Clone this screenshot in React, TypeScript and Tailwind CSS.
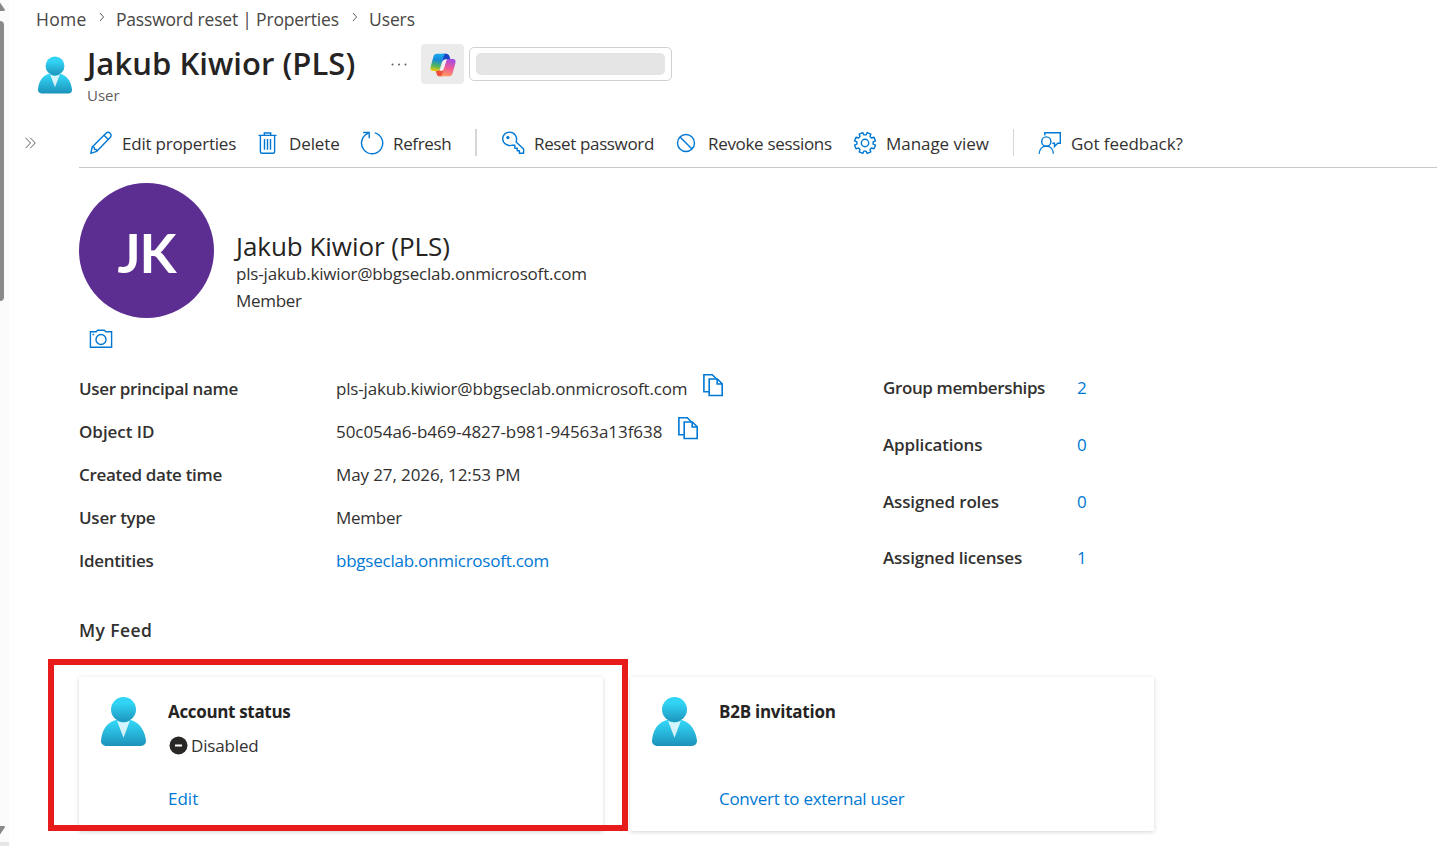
import React from "react";

const stroke = {
  fill: "none",
  stroke: "#0078d4",
  strokeWidth: 1.4,
};

const EditIcon = () => (
  <svg width="24" height="24" viewBox="0 0 24 24" {...stroke}>
    <path d="M1.8 22.3 3.2 16 17 2.2a2.9 2.9 0 0 1 4.2 0 2.9 2.9 0 0 1 0 4.2L7.8 20.3z" strokeLinejoin="round" />
    <path d="M3.4 15.9c1.3-.1 2.1.5 2.1 2.3 1.8 0 2.4.8 2.3 2.1M15 4.3l4.3 4.3" />
  </svg>
);

const DeleteIcon = () => (
  <svg width="24" height="24" viewBox="0 0 24 24" {...stroke}>
    <path d="M2.5 4.4h18M8.3 4.2V2h6.4v2.2M4.400 4.5v16.200c0 .9.6 1.5 1.5 1.5h11.200c.9 0 1.5-.6 1.5-1.5V4.5" />
    <path d="M8.5 8v10.8M11.5 8v10.8M14.5 8v10.8" />
  </svg>
);

const RefreshIcon = () => (
  <svg width="24" height="24" viewBox="0 0 24 24" {...stroke}>
    <path d="M14.8 1.9A10.6 10.6 0 1 1 8.2 2.3M3.2 1.5h6v5.8" />
  </svg>
);

const KeyIcon = () => (
  <svg width="24" height="24" viewBox="0 0 24 24" {...stroke}>
    <path
      d="M15.1 10.9 22.6 18v4.3h-4.2v-2.5h-2.2v-2.5h-2.4v-3l-2.2-.1c-4.2 1.4-9.9-1.3-9.9-6.400 0-3.8 3-6.700 6.800-6.700 4.900 0 8.300 4.800 6.600 9.800z"
      strokeLinejoin="round"
    />
    <circle cx="6.9" cy="6.6" r="1" fill="#0078d4" />
  </svg>
);

const BlockIcon = () => (
  <svg width="24" height="24" viewBox="0 0 24 24" {...stroke}>
    <circle cx="12" cy="12" r="8.5" />
    <path d="m6 6 12 12" />
  </svg>
);

const SettingsIcon = () => {
  const teeth = [
    [-15, 8.2],
    [-10.5, 10.7],
    [10.5, 10.7],
    [15, 8.2],
  ];
  let points = "";
  for (let i = 0; i < 8; i++) {
    teeth.forEach(([deg, r]) => {
      const a = ((i * 45 + 22.5 + deg) * Math.PI) / 180;
      points += `${(12 + r * Math.cos(a)).toFixed(2)},${(12 + r * Math.sin(a)).toFixed(2)} `;
    });
  }
  return (
    <svg width="24" height="24" viewBox="0 0 24 24" {...stroke}>
      <polygon points={points} strokeLinejoin="round" />
      <circle cx="12" cy="12" r="3.7" />
    </svg>
  );
};

const FeedbackIcon = () => (
  <svg width="24" height="24" viewBox="0 0 24 24" {...stroke}>
    <circle cx="8.3" cy="10.5" r="4.6" />
    <path d="M1.2 22.8c.2-4.700 3-7.700 7.100-7.700s6.900 3 7.100 7.700M6.800 4.500V1.700h15.500v10.600h-2.600l-3.200 3.300v-3.300h-2.200" />
  </svg>
);

const CameraIcon = () => (
  <svg width="24" height="20" viewBox="0 0 24 20" {...stroke}>
    <path d="M1.4 2.8h5.800l1.500-1.500h6.600l1.500 1.500h5.800v15.500H1.400z" />
    <circle cx="12" cy="10.5" r="5" />
    <path d="M3.5 5.5H5" />
  </svg>
);

const CopyIcon = () => (
  <svg width="22" height="24" viewBox="0 0 22 24" {...stroke} strokeWidth="1.6">
    <path d="M7 18.700H1.900V1.800h8.400l4.200 4.200" />
    <path d="M7.200 6h8.200l4.800 4.800v11.700h-13zM15.200 6v5h5" />
  </svg>
);

const PersonIcon = ({ className, id }: { className: string; id: string }) => (
  <svg className={className} viewBox="0 0 45 49">
    <defs>
      <linearGradient id={`${id}-body`} x1="0" y1="22" x2="0" y2="52" gradientUnits="userSpaceOnUse">
        <stop offset="0.1" stopColor="#32d4f5" />
        <stop offset="1" stopColor="#198ab3" />
      </linearGradient>
      <linearGradient id={`${id}-head`} x1="0" y1="0" x2="0" y2="28" gradientUnits="userSpaceOnUse">
        <stop offset="0.22" stopColor="#32d4f5" />
        <stop offset="1" stopColor="#198ab3" />
      </linearGradient>
    </defs>
    <path d="M40 49a5 5 0 0 0 5-5v-.6C43.500 31.500 36.500 22 22.500 22S1.300 30.200 0 43.400A5 5 0 0 0 4.400 49z" fill={`url(#${id}-body)`} />
    <path d="M22.5 25.500c-2.400 0-4.700-.8-6.600-2l6.600 17.200L29 23.600a12 12 0 0 1-6.500 1.900z" fill="#fff" opacity=".8" />
    <circle cx="22.5" cy="12.5" r="12.5" fill={`url(#${id}-head)`} />
  </svg>
);

const CopilotIcon = () => (
  <svg width="26" height="24" viewBox="0 0 26 24">
    <defs>
      <linearGradient id="cp-left" x1="8" y1="1" x2="5" y2="18" gradientUnits="userSpaceOnUse">
        <stop offset="0" stopColor="#17a9ee" />
        <stop offset=".35" stopColor="#1689d8" />
        <stop offset=".7" stopColor="#53b55f" />
        <stop offset="1" stopColor="#f2cb0a" />
      </linearGradient>
      <linearGradient id="cp-right" x1="21" y1="6" x2="17" y2="24" gradientUnits="userSpaceOnUse">
        <stop offset="0" stopColor="#a04be8" />
        <stop offset=".5" stopColor="#ee5a96" />
        <stop offset="1" stopColor="#ff9d5c" />
      </linearGradient>
    </defs>
    <path d="M13 .7h3.400c1.600 0 2.500.9 3 2.400l1.100 3.700h-5.200c-2 0-2.800 1-3.300 2.700z" fill="#1b45c4" />
    <path d="M13 23.300H9.600c-1.600 0-2.500-.9-3-2.400l-1.100-3.700h5.200c2 0 2.800-1 3.300-2.700z" fill="#f0503a" />
    <path d="M7.200.7h9c-1.600.2-2.200 1.400-2.700 3l-3.300 11.200c-.6 2-1.500 3.100-3.500 3.100H3.200C1 18 0 16.400.6 14L3.300 3.900C3.900 1.800 5.100.7 7.200.7z" fill="url(#cp-left)" />
    <path d="M18.800 23.300h-9c1.600-.2 2.200-1.400 2.700-3l3.300-11.200c.6-2 1.500-3.100 3.500-3.100h3.500c2.200 0 3.200 1.600 2.600 4l-2.700 10.100c-.6 2.100-1.800 3.200-3.900 3.200z" fill="url(#cp-right)" />
    {/* light fold between the two ribbons */}
    <path d="M17.600 6.300h-1.800c-1.400 0-2 .8-2.400 2.100l-2.300 7.600c-.3 1-.7 1.600-1.500 2h1.400c1.400 0 2.100-.8 2.500-2.100l2.300-7.500c.3-1 .8-1.700 1.800-2.100z" fill="#f4f1f3" />
  </svg>
);

const Chevron = () => (
  <svg width="6" height="10" viewBox="0 0 6 10" fill="none" stroke="#605e5c">
    <path d="m1 1 3.600 4L1 9" />
  </svg>
);

const details = [
  { label: "User principal name", labelClass: "tracking-[-0.34px]", value: "pls-jakub.kiwior@bbgseclab.onmicrosoft.com", valueClass: "tracking-[-0.17px]", copy: true },
  { label: "Object ID", labelClass: "tracking-[-0.04px]", value: "50c054a6-b469-4827-b981-94563a13f638", valueClass: "tracking-[-0.05px]", copy: true },
  { label: "Created date time", labelClass: "tracking-[-0.31px]", value: "May 27, 2026, 12:53 PM", valueClass: "tracking-[-0.11px]" },
  { label: "User type", labelClass: "tracking-[-0.26px]", value: "Member", valueClass: "tracking-[-0.25px]" },
  { label: "Identities", labelClass: "tracking-[-0.3px]", value: "bbgseclab.onmicrosoft.com", valueClass: "tracking-[-0.24px] text-[#0078d4]" },
];

const counts = [
  { label: "Group memberships", labelClass: "tracking-[-0.38px]", value: 2 },
  { label: "Applications", labelClass: "tracking-[-0.15px]", value: 0 },
  { label: "Assigned roles", labelClass: "tracking-[-0.15px]", value: 0 },
  { label: "Assigned licenses", labelClass: "tracking-[-0.2px]", value: 1 },
];

type CommandProps = {
  icon: React.ReactNode;
  text: string;
  className: string;
  textClass: string;
};

const Command = ({ icon, text, className, textClass }: CommandProps) => (
  <button className={`flex shrink-0 items-center ${className}`}>
    <span className="-mt-0.5 shrink-0">{icon}</span>
    <span className={textClass}>{text}</span>
  </button>
);

const App = () => {
  return (
    <div className="relative flex h-[846px] w-full overflow-hidden whitespace-nowrap bg-white font-['Open_Sans','Noto_Sans',sans-serif] text-[17px] leading-6 text-[#323130]">
      {/* scrollbar */}
      <div className="flex w-[9px] shrink-0 flex-col bg-[#fbfbfb]">
        <svg width="9" height="21" viewBox="0 0 9 21" fill="#8a8886">
          <path d="M-5 11 0 2.500 4.800 9.500c.3.800 0 1.500-1 1.500z" />
        </svg>
        <div className="h-[280px] w-1 rounded-r bg-[#8b8987]" />
        <svg className="mt-auto" width="9" height="20" viewBox="0 0 9 20" fill="#8a8886">
          <path d="M-5 4h8.800c1 0 1.300.7 1 1.400L0 12.500z" />
        </svg>
        <div className="h-1 bg-[#e6e6e6]" />
      </div>
      {/* collapsed menu */}
      <div className="w-[70px] shrink-0 pl-4 pt-[137px]">
        <svg width="12" height="12" viewBox="0 0 12 12" fill="none" stroke="#605e5c">
          <path d="m.5.8 5 5.200-5 5.200M5.300.8l5 5.200-5 5.200" />
        </svg>
      </div>
      <main className="min-w-0 flex-1">
        {/* breadcrumb */}
        <nav className="-ml-[43px] flex h-[38px] items-center text-[17.5px] text-[#484644]">
          <span className="w-[63px] tracking-[0.3px]">Home</span>
          <span className="-mt-[5px] w-[17px]"><Chevron /></span>
          <span className="w-[236px] tracking-[-0.2px]">Password reset | Properties</span>
          <span className="-mt-[5px] w-[17px]"><Chevron /></span>
          <span className="tracking-[-0.1px]">Users</span>
        </nav>
        {/* title */}
        <header className="-ml-[41px] flex h-[82px] pt-px">
          <PersonIcon className="mt-[17px] h-[38px] w-[34px]" id="user" />
          <div className="ml-[15px] w-[304px]">
            <h1 className="mt-1 h-10 text-[31px] font-semibold leading-10 tracking-[0.05px] text-[#252423]">
              Jakub Kiwior (PLS)
            </h1>
            <p className="h-6 text-[15px] text-[#605e5c]">User</p>
          </div>
          <svg className="mt-6 mr-[14px] shrink-0" width="16" height="3" viewBox="0 0 16 3" fill="#605e5c">
            <circle cx="1.5" cy="1.5" r="1" />
            <circle cx="8" cy="1.5" r="1" />
            <circle cx="14.5" cy="1.5" r="1" />
          </svg>
          <div className="mt-[5px] flex h-10 w-[43px] items-center justify-center rounded bg-[#ebebeb] pt-0.5">
            <CopilotIcon />
          </div>
          <div className="mt-2 ml-[5px] h-[34px] w-[203px] rounded-[5px] border border-[#d1d1d1] px-1.5 py-[5px]">
            <div className="h-[22px] rounded-[5px] bg-[#e5e5e5]" />
          </div>
        </header>
        {/* commands */}
        <div className="flex h-12 items-center border-b border-[#c8c8c8] pl-[10px]">
          <Command icon={<EditIcon />} text="Edit properties" className="w-[167px] gap-[9px]" textClass="tracking-[-0.2px]" />
          <Command icon={<DeleteIcon />} text="Delete" className="w-[104px] gap-[9px]" textClass="tracking-[-0.1px]" />
          <Command icon={<RefreshIcon />} text="Refresh" className="w-[115px] gap-[9px]" textClass="tracking-[-0.35px]" />
          <div className="mr-6 h-[27px] w-0.5 -translate-y-px bg-[#d6d6d6]" />
          <Command icon={<KeyIcon />} text="Reset password" className="w-[173px] gap-[9px]" textClass="tracking-[-0.36px]" />
          <Command icon={<BlockIcon />} text="Revoke sessions" className="w-[179px] gap-[10px]" textClass="tracking-[-0.32px]" />
          <Command icon={<SettingsIcon />} text="Manage view" className="w-[160px] gap-[9px]" textClass="tracking-[-0.05px]" />
          <div className="mr-6 h-[27px] w-px -translate-y-px bg-[#d6d6d6]" />
          <Command icon={<FeedbackIcon />} text="Got feedback?" className="gap-[9px]" textClass="tracking-[-0.05px]" />
        </div>
        {/* profile */}
        <section className="flex h-[150px] pt-[15px]">
          <div className="flex size-[135px] items-center justify-center rounded-full bg-[#5c2e91] pt-[5px] font-['Lato'] text-[54px] font-bold leading-none tracking-[-1px] text-white">
            JK
          </div>
          <div className="pl-[22px] pt-[47px]">
            <h2 className="h-8 text-[26px] leading-8 tracking-[-0.05px] text-[#252423]">Jakub Kiwior (PLS)</h2>
            <p className="h-[27px] tracking-[-0.18px]">pls-jakub.kiwior@bbgseclab.onmicrosoft.com</p>
            <p className="tracking-[-0.3px]">Member</p>
          </div>
        </section>
        <div className="h-[49px] pl-[10px] pt-[11px]">
          <CameraIcon />
        </div>
        {/* properties */}
        <section className="flex h-[248px]">
          <div className="w-[803px]">
            {details.map((item) => (
              <div className="flex h-[43px] items-center" key={item.label}>
                <span className={`w-[257px] font-semibold ${item.labelClass}`}>{item.label}</span>
                <span className={item.valueClass}>{item.value}</span>
                {item.copy && <span className="-mt-[7px] ml-[15px]"><CopyIcon /></span>}
              </div>
            ))}
          </div>
          <div className="-mt-[7px] pl-px">
            {counts.map((item) => (
              <div className="flex h-[56.7px] items-center" key={item.label}>
                <span className={`w-[194px] font-semibold ${item.labelClass}`}>{item.label}</span>
                <span className="text-[#0078d4]">{item.value}</span>
              </div>
            ))}
          </div>
        </section>
        {/* feed */}
        <h3 className="h-[62px] pt-[3px] text-[17.5px] font-semibold tracking-[0.4px]">My Feed</h3>
        <section className="flex gap-[27px]">
          <div className="flex h-[154px] w-[524px] bg-white pl-[22px] pt-5 shadow-[0_1px_4px_rgba(0,0,0,0.17)]">
            <PersonIcon className="h-[49px] w-[45px]" id="account" />
            <div className="pl-[22px]">
              <h4 className="mt-[3px] h-[33px] font-bold tracking-[-0.33px] text-[#252423]">Account status</h4>
              <div className="flex h-[54px] items-start gap-[3px]">
                <svg className="mt-[3px] ml-px" width="19" height="19" viewBox="0 0 19 19">
                  <circle cx="9.5" cy="9.5" r="9" fill="#292827" />
                  <path d="M6 9.500h7" stroke="#fff" strokeWidth="2" />
                </svg>
                <span className="pt-px tracking-[-0.15px]">Disabled</span>
              </div>
              <a className="text-[#0078d4]">Edit</a>
            </div>
          </div>
          <div className="flex h-[154px] w-[524px] bg-white pl-[22px] pt-5 shadow-[0_1px_4px_rgba(0,0,0,0.17)]">
            <PersonIcon className="h-[49px] w-[45px]" id="invite" />
            <div className="pl-[22px]">
              <h4 className="mt-[3px] h-[87px] font-bold tracking-[-0.25px] text-[#252423]">B2B invitation</h4>
              <a className="tracking-[-0.28px] text-[#0078d4]">Convert to external user</a>
            </div>
          </div>
        </section>
      </main>
      {/* highlight over the account card */}
      <div className="pointer-events-none absolute left-[47.5px] top-[659px] h-[172px] w-[580px] border-6 border-[#e81b1b]" />
    </div>
  );
};

export default App;
